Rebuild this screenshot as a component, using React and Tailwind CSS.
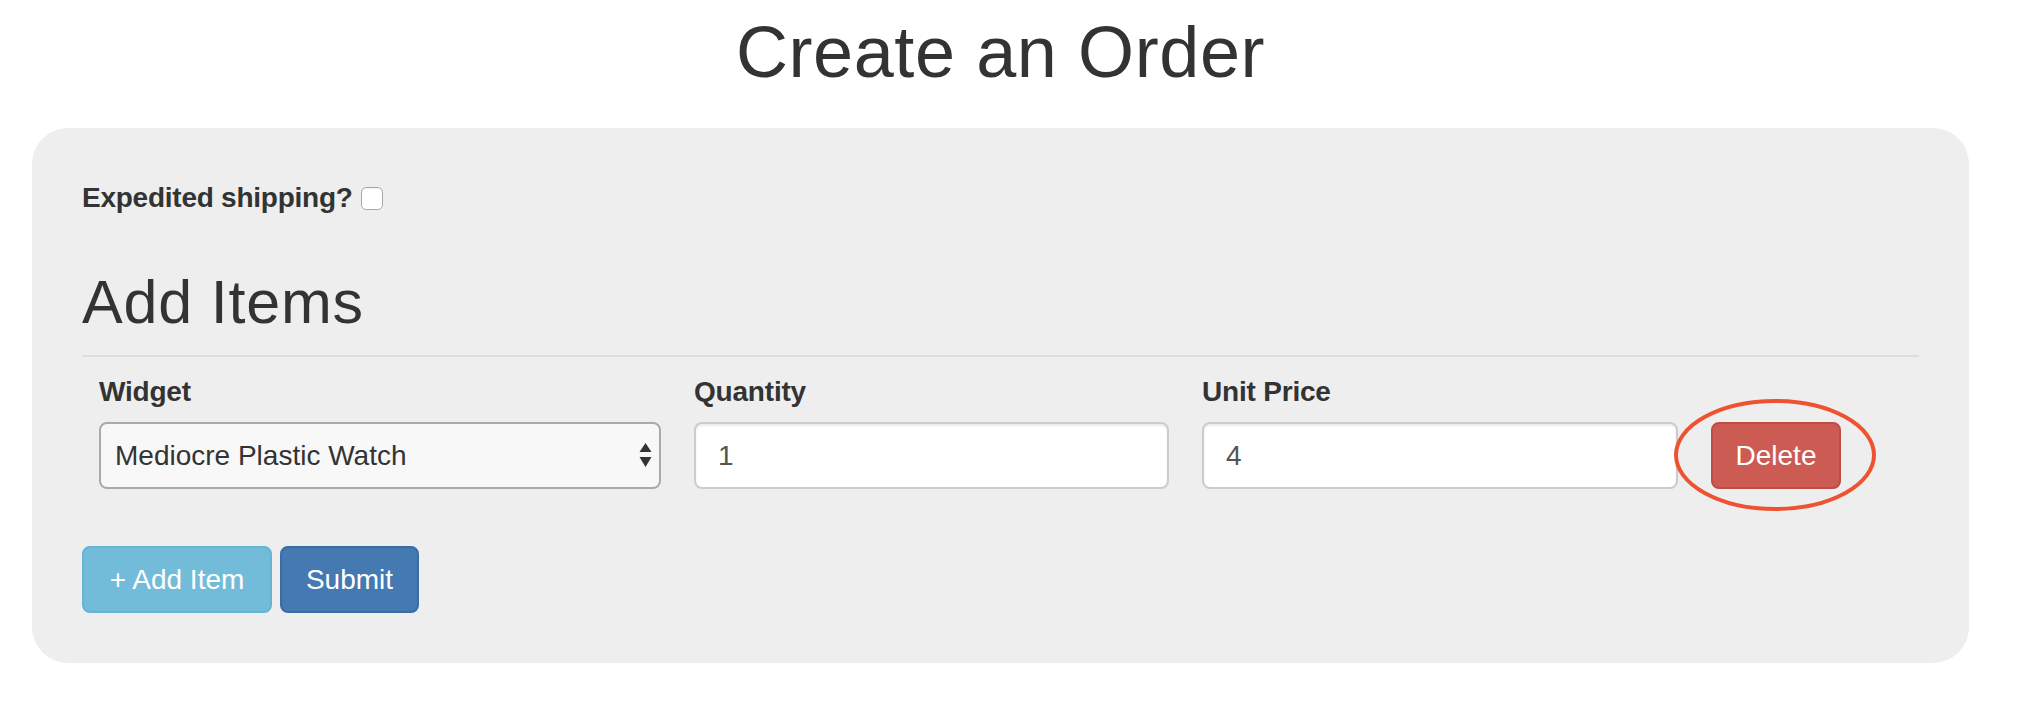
import React from 'react'

const font = { fontFamily: '"Liberation Sans", Arial, sans-serif' }

function Field({ label, width, children }) {
  return (
    <div className="flex flex-col" style={{ width }}>
      <label className="text-[28px] leading-[40px] font-bold tracking-[-0.2px] text-[#333] mb-[10px]">{label}</label>
      {children}
    </div>
  )
}

function TextInput({ value }) {
  return (
    <input
      type="text"
      defaultValue={value}
      className="w-full h-[67px] rounded-[8px] border-2 border-[#cccccc] bg-white pl-[22px] text-[28px] text-[#555] outline-none shadow-[inset_0_2px_2px_rgba(0,0,0,0.075)]"
      style={font}
    />
  )
}

export default function App() {
  return (
    <div className="w-[2001px] pl-[32px] bg-white text-[#333]" style={font}>
      <h1 className="w-[1937px] pt-[12px] text-center text-[72px] leading-[80px] tracking-[0.6px] font-normal">Create an Order</h1>

      <div className="mt-[36px] w-[1937px] rounded-[36px] bg-[#eeeeee] p-[50px]">
        <div className="flex items-center h-[40px]">
          <span className="text-[28px] leading-[40px] font-bold tracking-[-0.25px]">Expedited shipping?</span>
          <span className="ml-[8px] w-[22px] h-[23px] rounded-[5px] border-[1.5px] border-[#a8a8a8] bg-white shadow-[inset_0_1px_1px_rgba(0,0,0,0.06)]" />
        </div>

        <h2 className="mt-[51px] text-[61px] leading-[66px] tracking-[0.8px] font-normal">Add Items</h2>
        <div className="mt-[20px] h-[2px] bg-[#dddddd]" />

        <div className="mt-[15px] pl-[17px] flex items-end gap-[33px]">
          <Field label="Widget" width={562}>
            <div className="h-[67px] rounded-[8px] border-2 border-[#aaaaaa] bg-[#f8f8f8] pl-[14px] pr-[7px] flex items-center justify-between">
              <span className="text-[28px] text-[#333]">Mediocre Plastic Watch</span>
              <svg width="13" height="25" viewBox="0 0 13 25">
                <path d="M6.5 0 L12.5 9 L0.5 9 Z" fill="#333" />
                <path d="M0.5 14 L12.5 14 L6.5 24 Z" fill="#333" />
              </svg>
            </div>
          </Field>
          <Field label="Quantity" width={475}>
            <TextInput value="1" />
          </Field>
          <Field label="Unit Price" width={476}>
            <TextInput value="4" />
          </Field>
          <div className="relative">
            <button className="w-[130px] h-[67px] rounded-[8px] border-2 border-[#c14c44] bg-[#cc5b54] text-white text-[28px]" style={font}>
              Delete
            </button>
            <svg className="absolute left-[-38px] top-[-24px] pointer-events-none" width="204" height="114" viewBox="0 0 204 114">
              <ellipse cx="102" cy="57" rx="99" ry="54" fill="none" stroke="#ee5331" strokeWidth="4" />
            </svg>
          </div>
        </div>

        <div className="mt-[57px] flex gap-[8px]">
          <button className="w-[190px] h-[67px] rounded-[8px] border-2 border-[#63b4d5] bg-[#73bcd9] text-white text-[28px]" style={font}>
            + Add Item
          </button>
          <button className="w-[139px] h-[67px] rounded-[8px] border-2 border-[#3a6da4] bg-[#4479b1] text-white text-[28px]" style={font}>
            Submit
          </button>
        </div>
      </div>
    </div>
  )
}
